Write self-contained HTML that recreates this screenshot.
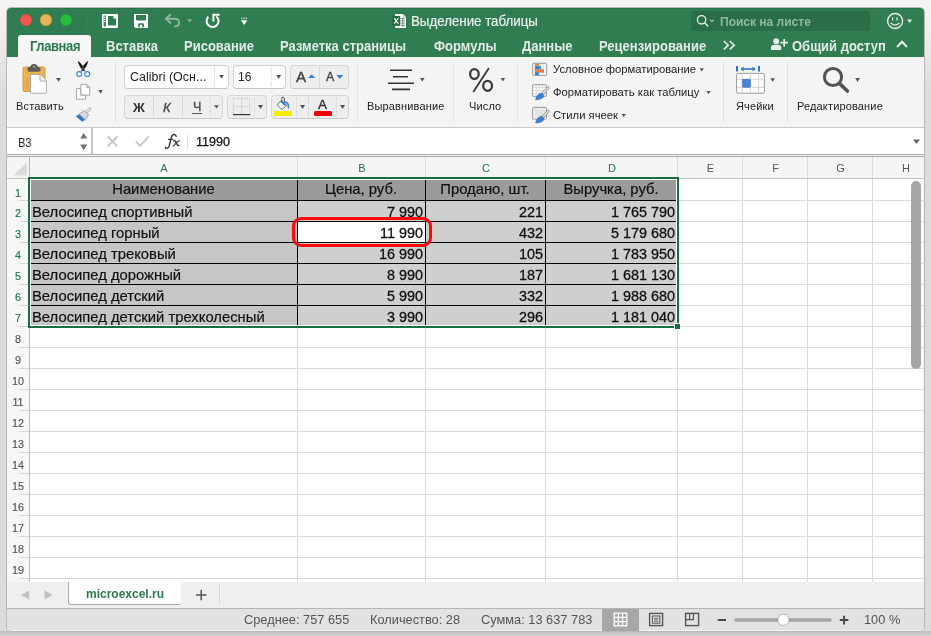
<!DOCTYPE html>
<html><head><meta charset="utf-8">
<style>
*{box-sizing:border-box;margin:0;padding:0}
html,body{width:931px;height:636px;overflow:hidden}
body{position:relative;background:#dcdcdc;font-family:"Liberation Sans",sans-serif;color:#222}
.a{position:absolute}
.t{position:absolute;white-space:nowrap;line-height:1;will-change:transform}
svg{position:absolute;overflow:visible}

</style></head><body>
<!-- outside -->
<div class="a" style="left:0;top:0;width:931px;height:120px;background:linear-gradient(#f5f5f5 0px,#f0f0f0 25px,#dcdcdc 95px)"></div>
<div class="a" style="left:0;top:631px;width:931px;height:5px;background:linear-gradient(#c2c2c2,#d0d0d0)"></div>
<!-- window frame -->
<div class="a" style="left:6px;top:7px;width:919px;height:625px;border-radius:5px;background:#f4f4f4;border:1px solid #b9b9b9"></div>
<!-- title bar green -->
<div class="a" style="left:7px;top:8px;width:917px;height:49px;border-radius:4px 4px 0 0;background:#307d51"></div>
<div class="a" style="left:11px;top:8px;width:909px;height:1px;background:#2a7249"></div>
<!-- traffic lights -->
<div class="a" style="left:20px;top:14px;width:12px;height:12px;border-radius:50%;background:#f2564f;box-shadow:inset 0 0 0 .6px #c9453d"></div>
<div class="a" style="left:40px;top:14px;width:12px;height:12px;border-radius:50%;background:#e9b35c;box-shadow:inset 0 0 0 .6px #c28a32"></div>
<div class="a" style="left:60px;top:14px;width:12px;height:12px;border-radius:50%;background:#29bb3c;box-shadow:inset 0 0 0 .6px #1f982d"></div>
<div class="a" style="left:86px;top:12px;width:1px;height:17px;background:#3a8559"></div>

<!-- title bar icons -->
<svg style="left:0;top:0" width="931" height="60" viewBox="0 0 931 60">
  <!-- sidebar icon -->
  <rect x="102" y="14" width="16" height="14" rx="1" fill="#fff"/>
  <rect x="103.6" y="15.5" width="2.2" height="11" fill="#307d51"/>
  <circle cx="104.7" cy="17.3" r=".7" fill="#fff"/><circle cx="104.7" cy="19.4" r=".7" fill="#fff"/><circle cx="104.7" cy="21.5" r=".7" fill="#fff"/>
  <path d="M108 16 H113.2 L116 18.8 V25.5 H108 Z" fill="#307d51"/>
  <path d="M113.4 16.2 L115.8 18.6 H113.4 Z" fill="#fff"/>
  <!-- save icon -->
  <path d="M134 14 H147 Q148 14 148 15 V27 Q148 28 147 28 H135.6 L134 26.4 Z" fill="#fff"/>
  <path d="M136 15 H146 V19.2 Q146 20.6 144.6 20.6 H137.4 Q136 20.6 136 19.2 Z" fill="#307d51"/>
  <path d="M138.2 27.2 V24.6 Q138.2 23.2 139.6 23.2 H142.6 Q144 23.2 144 24.6 V27.2 Z" fill="#307d51"/>
  <rect x="139.8" y="24.8" width="2.4" height="2.4" fill="#fff"/>
  <!-- undo dim -->
  <g fill="none" stroke="#8db99c" stroke-width="1.9" stroke-linecap="round" stroke-linejoin="round">
    <path d="M170.3 14.8 L166 18.8 L170.3 22.8"/>
    <path d="M166.3 18.8 H174.5 Q179 18.8 179 22.7 Q179 26.4 175 26.4"/>
  </g>
  <path d="M187.3 19.2 H191.9 L189.6 22.4 Z" fill="#8db99c"/>
  <!-- redo -->
  <g fill="none" stroke="#fff" stroke-width="2" stroke-linecap="butt">
    <path d="M208.4 16.7 A6 6 0 1 0 216.4 16.4"/>
    <path d="M219.6 14.8 H213.4 V21.4"/>
  </g>
  <!-- customize -->
  <path d="M241.3 18.2 H247.3" stroke="#fff" stroke-width="1" stroke-dasharray="1 .6"/>
  <path d="M241 20.3 H247.4 L244.2 25 Z" fill="#fff"/>
  <!-- doc icon -->
  <path d="M395 14 H403 L406 17 V28 H395 Z" fill="#fff"/>
  <path d="M403 14 V17 H406" fill="none" stroke="#9a9a9a" stroke-width=".6"/>
  <g stroke="#666" stroke-width=".7">
    <path d="M400.5 18.5 H405 M400.5 20.8 H405 M400.5 23.1 H405 M400.5 25.4 H405 M402.8 18 V27"/>
  </g>
  <rect x="392.4" y="16" width="7.8" height="9.8" fill="#1e6a3d"/>
  <path d="M394.2 18.2 L398.4 23.6 M398.4 18.2 L394.2 23.6" stroke="#fff" stroke-width="1.2"/>
  <!-- search -->
  <rect x="691" y="11" width="179" height="20" rx="3" fill="#2a6e47"/>
  <circle cx="701.6" cy="19.8" r="4.2" fill="none" stroke="#e8efe9" stroke-width="1.3"/>
  <path d="M704.6 22.8 L707.8 26" stroke="#e8efe9" stroke-width="1.4" stroke-linecap="round"/>
  <path d="M709.8 19.6 L711.9 21.6 L714 19.6" fill="none" stroke="#e8efe9" stroke-width="1"/>
  <!-- smiley -->
  <circle cx="895.1" cy="21" r="7.5" fill="none" stroke="#eef3ef" stroke-width="1.3"/>
  <path d="M892.6 17.3 V20.4 M897 17.3 V20.4" stroke="#eef3ef" stroke-width="1.2"/>
  <path d="M890.6 22.8 Q895.1 27.4 899.6 22.8" fill="none" stroke="#eef3ef" stroke-width="1.2"/>
  <path d="M907.2 19.4 H912 L909.6 23 Z" fill="#eef3ef"/>
  <!-- chevrons >> -->
  <g fill="none" stroke="#e6eee8" stroke-width="1.6">
    <path d="M723.8 41 L728.2 45.2 L723.8 49.4 M729.8 41 L734.2 45.2 L729.8 49.4"/>
  </g>
  <!-- person + -->
  <circle cx="776.2" cy="41.3" r="3" fill="#e6eee8"/>
  <path d="M771 50 V47.8 Q771 44.8 774.4 44.8 H778 Q781.2 44.8 781.2 47.8 V50 Z" fill="#e6eee8"/>
  <path d="M780.4 42.6 H788 M784.2 38.9 V46.4" stroke="#e6eee8" stroke-width="1.7"/>
  <!-- collapse ^ -->
  <path d="M897.6 46.4 L902 41.8 L906.4 46.4" fill="none" stroke="#eef3ef" stroke-width="2" stroke-linecap="round"/>
</svg>
<!-- title -->
<div class="t" style="left:411.4px;top:14.3px;font-size:13.3px;color:#eef3ef;transform:scaleY(1.12);transform-origin:0 0;-webkit-text-stroke:.15px #eef3ef">Выделение таблицы</div>
<div class="t" style="left:720px;top:16px;font-size:12px;font-weight:bold;color:#8dbb9c">Поиск на листе</div>
<!-- active tab -->
<div class="a" style="left:18px;top:35px;width:73px;height:22px;background:#f6f6f6;border-radius:3px 3px 0 0"></div>
<div class="t" style="left:30px;top:38.6px;font-size:13px;font-weight:bold;transform:scaleY(1.09);transform-origin:0 0;color:#2b7a4b;letter-spacing:-0.4px">Главная</div>
<div class="t" style="left:106px;top:38.6px;font-size:13px;font-weight:bold;transform:scaleY(1.09);transform-origin:0 0;color:#e2ebe5">Вставка</div>
<div class="t" style="left:184px;top:38.6px;font-size:13px;font-weight:bold;transform:scaleY(1.09);transform-origin:0 0;color:#e2ebe5">Рисование</div>
<div class="t" style="left:280px;top:38.6px;font-size:13px;font-weight:bold;transform:scaleY(1.09);transform-origin:0 0;color:#e2ebe5">Разметка страницы</div>
<div class="t" style="left:434px;top:38.6px;font-size:13px;font-weight:bold;transform:scaleY(1.09);transform-origin:0 0;color:#e2ebe5">Формулы</div>
<div class="t" style="left:522px;top:38.6px;font-size:13px;font-weight:bold;transform:scaleY(1.09);transform-origin:0 0;color:#e2ebe5">Данные</div>
<div class="t" style="left:599px;top:38.6px;font-size:13px;font-weight:bold;transform:scaleY(1.09);transform-origin:0 0;color:#e2ebe5">Рецензирование</div>
<div class="t" style="left:792px;top:38.6px;font-size:13px;font-weight:bold;transform:scaleY(1.09);transform-origin:0 0;color:#e2ebe5">Общий доступ</div>

<!-- ribbon -->
<div class="a" style="left:7px;top:57px;width:917px;height:71px;background:#f4f4f4"></div>
<div class="a" style="left:7px;top:127px;width:917px;height:1px;background:#c8c8c8"></div>
<!-- separators -->
<div class="a" style="left:115px;top:62px;width:1px;height:60px;background:#e2e2e2"></div>
<div class="a" style="left:357px;top:62px;width:1px;height:60px;background:#e2e2e2"></div>
<div class="a" style="left:453px;top:62px;width:1px;height:60px;background:#e2e2e2"></div>
<div class="a" style="left:517px;top:62px;width:1px;height:60px;background:#e2e2e2"></div>
<div class="a" style="left:723px;top:62px;width:1px;height:60px;background:#e2e2e2"></div>
<div class="a" style="left:787px;top:62px;width:1px;height:60px;background:#e2e2e2"></div>
<!-- font boxes -->
<div class="a" style="left:124px;top:65px;width:105px;height:24px;border-radius:4px;background:#fff;border:1px solid #d3d3d3;border-bottom-color:#c4c4c4"></div>
<div class="a" style="left:214px;top:68px;width:0;height:18px;border-left:1px dotted #d6d6d6"></div>
<div class="a" style="left:233px;top:65px;width:53px;height:24px;border-radius:4px;background:#fff;border:1px solid #d3d3d3;border-bottom-color:#c4c4c4"></div>
<div class="a" style="left:271px;top:68px;width:0;height:18px;border-left:1px dotted #d6d6d6"></div>
<div class="a" style="left:290px;top:65px;width:59px;height:24px;border-radius:4px;background:#eeeeee;border:1px solid #d6d6d6;border-bottom-color:#c8c8c8"></div>
<div class="a" style="left:319px;top:66px;width:1px;height:22px;background:#dadada"></div>
<div class="a" style="left:124px;top:95px;width:99px;height:24px;border-radius:4px;background:#eeeeee;border:1px solid #d6d6d6;border-bottom-color:#c8c8c8"></div>
<div class="a" style="left:153px;top:96px;width:1px;height:22px;background:#dadada"></div>
<div class="a" style="left:182px;top:96px;width:1px;height:22px;background:#dadada"></div>
<div class="a" style="left:210px;top:98px;width:0;height:18px;border-left:1px dotted #d3d3d3"></div>
<div class="a" style="left:227px;top:95px;width:40px;height:24px;border-radius:4px;background:#eeeeee;border:1px solid #d6d6d6;border-bottom-color:#c8c8c8"></div>
<div class="a" style="left:254px;top:98px;width:0;height:18px;border-left:1px dotted #d3d3d3"></div>
<div class="a" style="left:271px;top:95px;width:78px;height:24px;border-radius:4px;background:#eeeeee;border:1px solid #d6d6d6;border-bottom-color:#c8c8c8"></div>
<div class="a" style="left:296px;top:98px;width:0;height:18px;border-left:1px dotted #d3d3d3"></div>
<div class="a" style="left:308px;top:96px;width:1px;height:22px;background:#dadada"></div>
<div class="a" style="left:336px;top:98px;width:0;height:18px;border-left:1px dotted #d3d3d3"></div>
<div class="t" style="left:129.6px;top:71.4px;font-size:12.5px;color:#222">Calibri (Осн...</div>
<div class="t" style="left:238.2px;top:71px;font-size:12px;color:#222">16</div>
<div class="t" style="left:296px;top:68.6px;font-size:15.2px;color:#444;-webkit-text-stroke:.45px #444">A</div>
<div class="t" style="left:325.8px;top:71.2px;font-size:12.4px;color:#444;-webkit-text-stroke:.35px #444">A</div>
<div class="t" style="left:133px;top:101px;font-size:13px;font-weight:bold;color:#333">Ж</div>
<div class="t" style="left:163px;top:101px;font-size:13px;font-style:italic;color:#4a4a4a;-webkit-text-stroke:.35px #4a4a4a">К</div>
<div class="t" style="left:193px;top:101px;font-size:12.5px;color:#4a4a4a;-webkit-text-stroke:.3px #4a4a4a">Ч</div>
<div class="a" style="left:192px;top:113px;width:10px;height:1px;background:#555"></div>
<div class="t" style="left:317.6px;top:98.4px;font-size:13.5px;color:#333;-webkit-text-stroke:.35px #333">A</div>
<div class="a" style="left:274px;top:111px;width:18px;height:4.6px;background:#f0ef00"></div>
<div class="a" style="left:314px;top:111px;width:18px;height:4.6px;border-radius:1.5px;background:#ee0000"></div>
<!-- labels -->
<div class="t" style="left:16px;top:101.4px;font-size:11px;color:#222;letter-spacing:.15px">Вставить</div>
<div class="t" style="left:367px;top:101.4px;font-size:11px;color:#222;letter-spacing:.15px">Выравнивание</div>
<div class="t" style="left:469px;top:101.4px;font-size:11px;color:#222;letter-spacing:.15px">Число</div>
<div class="t" style="left:553.4px;top:64.2px;font-size:11.25px;color:#222">Условное форматирование</div>
<div class="t" style="left:553.4px;top:87px;font-size:11.25px;color:#222">Форматировать как таблицу</div>
<div class="t" style="left:553.4px;top:110px;font-size:11.25px;color:#222">Стили ячеек</div>
<div class="t" style="left:736px;top:101.4px;font-size:11px;color:#222;letter-spacing:.15px">Ячейки</div>
<div class="t" style="left:797px;top:101.4px;font-size:11px;color:#222;letter-spacing:.15px">Редактирование</div>
<svg style="left:0;top:0" width="931" height="130" viewBox="0 0 931 130">
  <!-- paste -->
  <rect x="23" y="67" width="22" height="24.5" rx="1.5" fill="#eab34f" stroke="#d58a3c" stroke-width=".8"/>
  <rect x="27.4" y="67" width="13.2" height="4.8" rx="2" fill="#5c5c5c"/>
  <path d="M30.2 67.5 Q30.2 64 34 64 Q37.8 64 37.8 67.5 Z" fill="#5c5c5c"/>
  <circle cx="34" cy="66.6" r=".9" fill="#eab34f"/>
  <g fill="#d68a3e"><circle cx="27.5" cy="77" r=".6"/><circle cx="27.5" cy="79" r=".6"/><circle cx="27.5" cy="81" r=".6"/><circle cx="26.3" cy="83" r=".6"/><circle cx="28.4" cy="83" r=".6"/><circle cx="26.3" cy="85" r=".6"/><circle cx="28.4" cy="85" r=".6"/><circle cx="26.3" cy="87" r=".6"/><circle cx="28.4" cy="87" r=".6"/><circle cx="26.3" cy="89" r=".6"/><circle cx="28.4" cy="89" r=".6"/></g>
  <path d="M30.5 74.5 H40 L46.4 81 V92.6 Q46.4 93.2 45.8 93.2 H31.1 Q30.5 93.2 30.5 92.6 Z" fill="#fff" stroke="#9a9a9a" stroke-width=".8"/>
  <path d="M40 74.5 V80.4 Q40 81 40.6 81 H46.4" fill="#f0f0f0" stroke="#9a9a9a" stroke-width=".8"/>
  <path d="M56 78 H61 L58.5 81.7 Z" fill="#555"/>
  <!-- scissors -->
  <path d="M78.2 61.4 Q79.4 67.6 84.6 71.4 Q83.4 65 78.2 61.4 Z M87.8 61.4 Q86.6 67.6 81.4 71.4 Q82.6 65 87.8 61.4 Z" fill="#111" stroke="#111" stroke-width=".6" stroke-linejoin="round"/>
  <circle cx="79.2" cy="74" r="2.45" fill="#fff" stroke="#3784da" stroke-width="1.2"/>
  <circle cx="87.2" cy="74" r="2.45" fill="#fff" stroke="#3784da" stroke-width="1.2"/>
  <!-- copy -->
  <path d="M80.8 84.4 H86.8 L89.8 87.4 V95.2 H80.8 Z" fill="#fff" stroke="#9c9c9c" stroke-width=".9"/>
  <path d="M86.8 84.4 V87.4 H89.8" fill="none" stroke="#9c9c9c" stroke-width=".9"/>
  <path d="M76.4 88.6 H80.8 V95.2 H85.6 V99.2 H76.4 Z" fill="#fff" stroke="#9c9c9c" stroke-width=".9"/>
  <path d="M98.3 90 H102.8 L100.55 93.8 Z" fill="#555"/>
  <!-- brush -->
  <path d="M85.5 111.5 L89.5 107.8 Q91.4 107.6 90.8 109.8 L87 113.3 Z" fill="#e3e3e3" stroke="#9a9a9a" stroke-width=".7"/>
  <path d="M79 114.2 L84.3 110.6 L88.6 114.9 L85 120.2 Z" fill="#d9d9d9" stroke="#8f8f8f" stroke-width=".7"/>
  <path d="M75.6 116 L79.6 114.4 L85 119.8 L82.2 121.8 Z" fill="#2f73cc"/>
  <path d="M79 114.5 L84.6 120" stroke="#8a8a8a" stroke-width=".8"/>
  <!-- A▲ A▼ triangles -->
  <path d="M308 78 L311.6 74.3 L315.3 78 Z" fill="#3a82d8"/>
  <path d="M336.3 75 H343.3 L339.8 79 Z" fill="#3a82d8"/>
  <!-- dropdown arrows -->
  <g fill="#555">
    <path d="M219.2 75 H223.8 L221.5 78.8 Z"/>
    <path d="M276.3 75 H281 L278.65 79 Z"/>
    <path d="M214 105.2 H219 L216.5 108.6 Z"/>
    <path d="M258 105 H263 L260.5 109 Z"/>
    <path d="M300 105 H305 L302.5 109 Z"/>
    <path d="M340 105 H345 L342.5 109 Z"/>
    <path d="M420 78 H424.6 L422.3 81.6 Z"/>
    <path d="M500.6 78 H505.2 L502.9 81.6 Z"/>
    <path d="M699.6 68.2 H703.8 L701.7 71.4 Z"/>
    <path d="M706.4 91 H710.6 L708.5 94.2 Z"/>
    <path d="M621.6 114 H625.8 L623.7 117.2 Z"/>
    <path d="M770.3 78.2 H775 L772.65 81.7 Z"/>
    <path d="M855.2 78 H860 L857.6 82 Z"/>
  </g>
  <!-- borders icon -->
  <g stroke="#a8a8a8" stroke-width=".7" stroke-dasharray=".9 1.1" fill="none">
    <rect x="233.4" y="98.4" width="16.4" height="16"/>
    <path d="M241.6 98.4 V114.4 M233.4 106.4 H249.8"/>
  </g>
  <path d="M233 114.6 H250.2" stroke="#333" stroke-width="1.2"/>
  <!-- fill bucket -->
  <path d="M277.1 104.8 L281.2 100.6 L286.5 105.3 L282 109.6 Z" fill="#fff" stroke="#666" stroke-width="1"/>
  <path d="M281.4 101.4 L285.7 105.3" stroke="#3a82d8" stroke-width="2.2"/>
  <path d="M281.6 101.6 Q281.2 97 283.2 97 Q284.8 97 284.4 102.6" fill="none" stroke="#333" stroke-width=".9"/>
  <path d="M285 102 Q288.8 102.4 288.4 107.6" fill="none" stroke="#3a82d8" stroke-width="1.6" stroke-linecap="round"/>
  <!-- alignment -->
  <g stroke="#333" stroke-width="1.6">
    <path d="M390 70.2 H412 M393 76.8 H408 M388 83.2 H414 M392 89.4 H410"/>
  </g>
  <!-- percent -->
  <ellipse cx="474.4" cy="74" rx="4.3" ry="4.95" fill="none" stroke="#3c3c3c" stroke-width="2.3"/>
  <ellipse cx="487.6" cy="85.85" rx="4.4" ry="4.95" fill="none" stroke="#3c3c3c" stroke-width="2.3"/>
  <path d="M488.6 68.6 L473.6 91.4" stroke="#3a3a3a" stroke-width="1.8" stroke-linecap="round"/>
  <!-- conditional formatting icon -->
  <rect x="532.6" y="63.4" width="14" height="12" rx="1.2" fill="#fff" stroke="#a6a6a6" stroke-width="1.1"/>
  <g stroke="#d4d4d4" stroke-width=".8"><path d="M535 63.6 V75.4 M543.5 63.6 V75.4 M533 66.2 H546.2 M533 69.1 H546.2 M533 72.2 H546.2"/></g>
  <rect x="535" y="64" width="3.9" height="2.1" fill="#de8150"/>
  <rect x="535" y="66.1" width="6" height="3" fill="#3a82d6"/>
  <rect x="535" y="69.1" width="9" height="3.6" fill="#de8150"/>
  <rect x="535" y="72.3" width="4" height="2.9" fill="#3a82d6"/>
  <!-- format as table -->
  <g>
    <rect x="532.6" y="84.6" width="13.8" height="11.8" rx="1.2" fill="#fff" stroke="#a6a6a6" stroke-width="1.1"/>
    <g stroke="#d2d2d2" stroke-width=".8"><path d="M536.3 85 V96 M539.4 85 V96 M542.6 85 V96 M533 87.4 H546 M533 90.4 H546 M533 93.4 H546"/></g>
    <path d="M541.8 93.2 L547.6 86.8 Q549.2 86.6 549 88.2 L543.6 94.8 Z" fill="#e6e6e6" stroke="#7d7d7d" stroke-width=".8"/>
    <path d="M535.6 99.8 Q536 95.6 539.6 93.6 Q541.8 92.4 543.6 94.4 Q544.6 96.4 542.6 98 Q539.8 100 535.6 99.8 Z" fill="#3b7fd4" stroke="#2a6cc0" stroke-width=".5"/>
  </g>
  <g>
    <rect x="532.6" y="107.4" width="13.8" height="11.8" rx="1.2" fill="#efefef" stroke="#a6a6a6" stroke-width="1.1"/>
    <path d="M533 110.4 H546 M536.2 107.8 V118.8" stroke="#d2d2d2" stroke-width=".8"/>
    <path d="M533 110.4 H546 V118.8 H536.2 V110.4" fill="#e4e4e4" stroke="none"/>
    <path d="M541.8 116.6 L547.6 110.2 Q549.2 110 549 111.6 L543.6 118.2 Z" fill="#e6e6e6" stroke="#7d7d7d" stroke-width=".8"/>
    <path d="M535.6 123 Q536 118.8 539.6 116.8 Q541.8 115.6 543.6 117.6 Q544.6 119.6 542.6 121.2 Q539.8 123.2 535.6 123 Z" fill="#3b7fd4" stroke="#2a6cc0" stroke-width=".5"/>
  </g>
  <!-- cells icon -->
  <rect x="736.6" y="73.4" width="27.8" height="19.8" rx="1.5" fill="#fff" stroke="#9a9a9a" stroke-width="1"/>
  <g stroke="#cfcfcf" stroke-width=".9"><path d="M742.3 73.6 V93 M750.4 73.6 V93 M758.6 73.6 V93 M736.8 79.2 H764.2 M736.8 87.4 H764.2"/></g>
  <rect x="742.4" y="79.3" width="8" height="8" rx=".8" fill="#4a86d0" stroke="#2f6fc4" stroke-width=".6"/>
  <path d="M737 66 V71.6 M759 66 V71.6" stroke="#2f73cc" stroke-width="2"/>
  <path d="M741.2 69 H755" stroke="#2f73cc" stroke-width="1.6"/>
  <path d="M740.6 69 L743.6 66.4 V71.6 Z M755.6 69 L752.6 66.4 V71.6 Z" fill="#2f73cc"/>
  <!-- magnifier -->
  <circle cx="833" cy="77" r="8.6" fill="none" stroke="#535353" stroke-width="3"/>
  <path d="M839.4 83.4 L847.4 91" stroke="#535353" stroke-width="3.6" stroke-linecap="round"/>
</svg>

<!-- formula bar -->
<div class="a" style="left:7px;top:128px;width:917px;height:26px;background:#fff"></div>
<div class="a" style="left:7px;top:154px;width:917px;height:1px;background:#acacac"></div>
<div class="a" style="left:7px;top:155px;width:917px;height:1px;background:#f4f4f4"></div>
<div class="a" style="left:7px;top:156px;width:917px;height:1px;background:#a9a9a9"></div>
<div class="a" style="left:91px;top:128px;width:1.5px;height:26px;background:#c9c9c9"></div>
<div class="t" style="left:17.6px;top:137.2px;font-size:12.5px;color:#222;transform:scaleX(.89);transform-origin:0 0">B3</div>
<div class="a" style="left:187px;top:134.5px;width:1px;height:14.5px;background:#dddddd"></div>
<div class="t" style="left:195.5px;top:136.4px;font-size:12.6px;color:#111;-webkit-text-stroke:.25px #111">11990</div>
<svg style="left:0;top:120px" width="931" height="40" viewBox="0 120 931 40">
  <path d="M80.2 138.5 L83.7 133 L87.2 138.5 Z M80.2 144.4 H87.2 L83.7 150.2 Z" fill="#707070"/>
  <path d="M107.6 136.5 L117.4 146.3 M117.4 136.5 L107.6 146.3" stroke="#c6c6c6" stroke-width="1.9"/>
  <path d="M135.8 141.2 L140.2 145.8 L148.6 136.6" fill="none" stroke="#c9c9c9" stroke-width="2"/>
  <path d="M176.2 136.4 Q175.6 134.4 173.8 134.6 Q171.8 134.9 171 138.6 L169.2 146 Q168.4 148.6 166.6 148.4 Q165.4 148.2 165.6 147.2" fill="none" stroke="#3f3f3f" stroke-width="1.5" stroke-linecap="round"/>
  <path d="M168 139.4 H173.2" stroke="#3f3f3f" stroke-width="1.3"/>
  <path d="M173.6 140.8 Q175 140 175.8 141.6 L177.2 144.6 Q177.8 145.9 179 145.6" fill="none" stroke="#3f3f3f" stroke-width="1.35" stroke-linecap="round"/>
  <path d="M179.4 140.6 Q178.4 140.6 176 143.2 Q174.2 145.6 173.2 145.8" fill="none" stroke="#3f3f3f" stroke-width="1.35" stroke-linecap="round"/>
  <path d="M913 139.4 H920 L916.5 144 Z" fill="#666"/>
</svg>

<div class="a" style="left:7px;top:157px;width:917px;height:21px;background:#f5f5f5"></div>
<div class="a" style="left:7px;top:178px;width:917px;height:1px;background:#c3c3c3"></div>
<div class="a" style="left:7px;top:179px;width:22px;height:403px;background:#f7f7f7"></div>
<div class="a" style="left:29px;top:157px;width:1px;height:425px;background:#b9b9b9"></div>
<div class="a" style="left:30px;top:179px;width:893px;height:403px;background:#fff"></div>
<div class="a" style="left:297px;top:179px;width:1px;height:403px;background:#dadada"></div>
<div class="a" style="left:297px;top:157px;width:1px;height:21px;background:#dcdcdc"></div>
<div class="a" style="left:425px;top:179px;width:1px;height:403px;background:#dadada"></div>
<div class="a" style="left:425px;top:157px;width:1px;height:21px;background:#dcdcdc"></div>
<div class="a" style="left:545px;top:179px;width:1px;height:403px;background:#dadada"></div>
<div class="a" style="left:545px;top:157px;width:1px;height:21px;background:#dcdcdc"></div>
<div class="a" style="left:677px;top:179px;width:1px;height:403px;background:#dadada"></div>
<div class="a" style="left:677px;top:157px;width:1px;height:21px;background:#dcdcdc"></div>
<div class="a" style="left:742px;top:179px;width:1px;height:403px;background:#dadada"></div>
<div class="a" style="left:742px;top:157px;width:1px;height:21px;background:#dcdcdc"></div>
<div class="a" style="left:807px;top:179px;width:1px;height:403px;background:#dadada"></div>
<div class="a" style="left:807px;top:157px;width:1px;height:21px;background:#dcdcdc"></div>
<div class="a" style="left:872px;top:179px;width:1px;height:403px;background:#dadada"></div>
<div class="a" style="left:872px;top:157px;width:1px;height:21px;background:#dcdcdc"></div>
<div class="a" style="left:30px;top:200px;width:894px;height:1px;background:#dadada"></div>
<div class="a" style="left:17px;top:200px;width:12px;height:1px;background:linear-gradient(90deg,rgba(220,220,220,0),#d6d6d6 40%)"></div>
<div class="a" style="left:30px;top:221px;width:894px;height:1px;background:#dadada"></div>
<div class="a" style="left:17px;top:221px;width:12px;height:1px;background:linear-gradient(90deg,rgba(220,220,220,0),#d6d6d6 40%)"></div>
<div class="a" style="left:30px;top:242px;width:894px;height:1px;background:#dadada"></div>
<div class="a" style="left:17px;top:242px;width:12px;height:1px;background:linear-gradient(90deg,rgba(220,220,220,0),#d6d6d6 40%)"></div>
<div class="a" style="left:30px;top:263px;width:894px;height:1px;background:#dadada"></div>
<div class="a" style="left:17px;top:263px;width:12px;height:1px;background:linear-gradient(90deg,rgba(220,220,220,0),#d6d6d6 40%)"></div>
<div class="a" style="left:30px;top:284px;width:894px;height:1px;background:#dadada"></div>
<div class="a" style="left:17px;top:284px;width:12px;height:1px;background:linear-gradient(90deg,rgba(220,220,220,0),#d6d6d6 40%)"></div>
<div class="a" style="left:30px;top:305px;width:894px;height:1px;background:#dadada"></div>
<div class="a" style="left:17px;top:305px;width:12px;height:1px;background:linear-gradient(90deg,rgba(220,220,220,0),#d6d6d6 40%)"></div>
<div class="a" style="left:30px;top:326px;width:894px;height:1px;background:#dadada"></div>
<div class="a" style="left:17px;top:326px;width:12px;height:1px;background:linear-gradient(90deg,rgba(220,220,220,0),#d6d6d6 40%)"></div>
<div class="a" style="left:30px;top:347px;width:894px;height:1px;background:#dadada"></div>
<div class="a" style="left:17px;top:347px;width:12px;height:1px;background:linear-gradient(90deg,rgba(220,220,220,0),#d6d6d6 40%)"></div>
<div class="a" style="left:30px;top:368px;width:894px;height:1px;background:#dadada"></div>
<div class="a" style="left:17px;top:368px;width:12px;height:1px;background:linear-gradient(90deg,rgba(220,220,220,0),#d6d6d6 40%)"></div>
<div class="a" style="left:30px;top:389px;width:894px;height:1px;background:#dadada"></div>
<div class="a" style="left:17px;top:389px;width:12px;height:1px;background:linear-gradient(90deg,rgba(220,220,220,0),#d6d6d6 40%)"></div>
<div class="a" style="left:30px;top:410px;width:894px;height:1px;background:#dadada"></div>
<div class="a" style="left:17px;top:410px;width:12px;height:1px;background:linear-gradient(90deg,rgba(220,220,220,0),#d6d6d6 40%)"></div>
<div class="a" style="left:30px;top:431px;width:894px;height:1px;background:#dadada"></div>
<div class="a" style="left:17px;top:431px;width:12px;height:1px;background:linear-gradient(90deg,rgba(220,220,220,0),#d6d6d6 40%)"></div>
<div class="a" style="left:30px;top:452px;width:894px;height:1px;background:#dadada"></div>
<div class="a" style="left:17px;top:452px;width:12px;height:1px;background:linear-gradient(90deg,rgba(220,220,220,0),#d6d6d6 40%)"></div>
<div class="a" style="left:30px;top:473px;width:894px;height:1px;background:#dadada"></div>
<div class="a" style="left:17px;top:473px;width:12px;height:1px;background:linear-gradient(90deg,rgba(220,220,220,0),#d6d6d6 40%)"></div>
<div class="a" style="left:30px;top:494px;width:894px;height:1px;background:#dadada"></div>
<div class="a" style="left:17px;top:494px;width:12px;height:1px;background:linear-gradient(90deg,rgba(220,220,220,0),#d6d6d6 40%)"></div>
<div class="a" style="left:30px;top:515px;width:894px;height:1px;background:#dadada"></div>
<div class="a" style="left:17px;top:515px;width:12px;height:1px;background:linear-gradient(90deg,rgba(220,220,220,0),#d6d6d6 40%)"></div>
<div class="a" style="left:30px;top:536px;width:894px;height:1px;background:#dadada"></div>
<div class="a" style="left:17px;top:536px;width:12px;height:1px;background:linear-gradient(90deg,rgba(220,220,220,0),#d6d6d6 40%)"></div>
<div class="a" style="left:30px;top:557px;width:894px;height:1px;background:#dadada"></div>
<div class="a" style="left:17px;top:557px;width:12px;height:1px;background:linear-gradient(90deg,rgba(220,220,220,0),#d6d6d6 40%)"></div>
<div class="a" style="left:30px;top:578px;width:894px;height:1px;background:#dadada"></div>
<div class="a" style="left:17px;top:578px;width:12px;height:1px;background:linear-gradient(90deg,rgba(220,220,220,0),#d6d6d6 40%)"></div>
<svg style="left:0;top:150px" width="40" height="40" viewBox="0 150 40 40"><path d="M27 162 V175.6 H13.2 Z" fill="#dcdcdc"/></svg>
<div class="t" style="left:29.5px;width:268px;top:163px;text-align:center;font-size:11px;color:#217a45">A</div>
<div class="t" style="left:297.5px;width:128px;top:163px;text-align:center;font-size:11px;color:#217a45">B</div>
<div class="t" style="left:425.5px;width:120px;top:163px;text-align:center;font-size:11px;color:#217a45">C</div>
<div class="t" style="left:545.5px;width:132px;top:163px;text-align:center;font-size:11px;color:#217a45">D</div>
<div class="t" style="left:677.5px;width:65px;top:163px;text-align:center;font-size:11px;color:#555">E</div>
<div class="t" style="left:742.5px;width:65px;top:163px;text-align:center;font-size:11px;color:#555">F</div>
<div class="t" style="left:807.5px;width:65px;top:163px;text-align:center;font-size:11px;color:#555">G</div>
<div class="t" style="left:872.5px;width:66px;top:163px;text-align:center;font-size:11px;color:#555">H</div>
<div class="t" style="left:7px;width:22px;top:188.2px;text-align:center;font-size:10.8px;color:#217a45;-webkit-text-stroke:.15px #217a45">1</div>
<div class="t" style="left:7px;width:22px;top:208.2px;text-align:center;font-size:10.8px;color:#217a45;-webkit-text-stroke:.15px #217a45">2</div>
<div class="t" style="left:7px;width:22px;top:229.2px;text-align:center;font-size:10.8px;color:#217a45;-webkit-text-stroke:.15px #217a45">3</div>
<div class="t" style="left:7px;width:22px;top:250.2px;text-align:center;font-size:10.8px;color:#217a45;-webkit-text-stroke:.15px #217a45">4</div>
<div class="t" style="left:7px;width:22px;top:271.2px;text-align:center;font-size:10.8px;color:#217a45;-webkit-text-stroke:.15px #217a45">5</div>
<div class="t" style="left:7px;width:22px;top:292.2px;text-align:center;font-size:10.8px;color:#217a45;-webkit-text-stroke:.15px #217a45">6</div>
<div class="t" style="left:7px;width:22px;top:313.2px;text-align:center;font-size:10.8px;color:#217a45;-webkit-text-stroke:.15px #217a45">7</div>
<div class="t" style="left:7px;width:22px;top:334.2px;text-align:center;font-size:10.8px;color:#555;-webkit-text-stroke:.15px #555">8</div>
<div class="t" style="left:7px;width:22px;top:355.2px;text-align:center;font-size:10.8px;color:#555;-webkit-text-stroke:.15px #555">9</div>
<div class="t" style="left:7px;width:22px;top:376.2px;text-align:center;font-size:10.8px;color:#555;-webkit-text-stroke:.15px #555">10</div>
<div class="t" style="left:7px;width:22px;top:397.2px;text-align:center;font-size:10.8px;color:#555;-webkit-text-stroke:.15px #555">11</div>
<div class="t" style="left:7px;width:22px;top:418.2px;text-align:center;font-size:10.8px;color:#555;-webkit-text-stroke:.15px #555">12</div>
<div class="t" style="left:7px;width:22px;top:439.2px;text-align:center;font-size:10.8px;color:#555;-webkit-text-stroke:.15px #555">13</div>
<div class="t" style="left:7px;width:22px;top:460.2px;text-align:center;font-size:10.8px;color:#555;-webkit-text-stroke:.15px #555">14</div>
<div class="t" style="left:7px;width:22px;top:481.2px;text-align:center;font-size:10.8px;color:#555;-webkit-text-stroke:.15px #555">15</div>
<div class="t" style="left:7px;width:22px;top:502.2px;text-align:center;font-size:10.8px;color:#555;-webkit-text-stroke:.15px #555">16</div>
<div class="t" style="left:7px;width:22px;top:523.2px;text-align:center;font-size:10.8px;color:#555;-webkit-text-stroke:.15px #555">17</div>
<div class="t" style="left:7px;width:22px;top:544.2px;text-align:center;font-size:10.8px;color:#555;-webkit-text-stroke:.15px #555">18</div>
<div class="t" style="left:7px;width:22px;top:565.2px;text-align:center;font-size:10.8px;color:#555;-webkit-text-stroke:.15px #555">19</div>
<div class="a" style="left:911px;top:181px;width:10px;height:188px;border-radius:5px;background:#a4a6a4"></div>
<div class="a" style="left:30px;top:179px;width:647px;height:147px;background:#fff"></div>
<div class="a" style="left:31px;top:180px;width:645px;height:20px;background:#9b9b9b"></div>
<div class="a" style="left:31px;top:201px;width:266px;height:124px;background:#c6c6c6"></div>
<div class="a" style="left:298px;top:201px;width:378px;height:124px;background:#cfcfcf"></div>
<div class="a" style="left:298px;top:222px;width:127px;height:20px;background:#fff"></div>
<div class="a" style="left:297px;top:180px;width:1px;height:145px;background:#000"></div>
<div class="a" style="left:425px;top:180px;width:1px;height:145px;background:#000"></div>
<div class="a" style="left:545px;top:180px;width:1px;height:145px;background:#000"></div>
<div class="a" style="left:31px;top:200px;width:645px;height:1px;background:#000"></div>
<div class="a" style="left:31px;top:221px;width:645px;height:1px;background:#000"></div>
<div class="a" style="left:31px;top:242px;width:645px;height:1px;background:#000"></div>
<div class="a" style="left:31px;top:263px;width:645px;height:1px;background:#000"></div>
<div class="a" style="left:31px;top:284px;width:645px;height:1px;background:#000"></div>
<div class="a" style="left:31px;top:305px;width:645px;height:1px;background:#000"></div>
<div class="a" style="left:28px;top:177px;width:651px;height:151px;border:2px solid #17703d"></div>
<div class="a" style="left:675px;top:324px;width:5px;height:5px;background:#17703d;box-shadow:0 0 0 1px #fff"></div>
<div class="t" style="left:30px;width:267px;top:181.9px;text-align:center;font-size:14.8px;color:#111;-webkit-text-stroke:.2px #111">Наименование</div>
<div class="t" style="left:297px;width:128px;top:181.9px;text-align:center;font-size:14.8px;color:#111;-webkit-text-stroke:.2px #111">Цена, руб.</div>
<div class="t" style="left:425px;width:120px;top:181.9px;text-align:center;font-size:14.8px;color:#111;-webkit-text-stroke:.2px #111">Продано, шт.</div>
<div class="t" style="left:545px;width:132px;top:181.9px;text-align:center;font-size:14.8px;color:#111;-webkit-text-stroke:.2px #111">Выручка, руб.</div>
<div class="t" style="left:32px;top:204.55px;font-size:14.8px;color:#111;-webkit-text-stroke:.2px #111">Велосипед спортивный</div>
<div class="t" style="left:297px;width:126px;top:204.7px;text-align:right;font-size:14.4px;color:#111;-webkit-text-stroke:.3px #111">7 990</div>
<div class="t" style="left:425px;width:118px;top:204.7px;text-align:right;font-size:14.4px;color:#111;-webkit-text-stroke:.3px #111">221</div>
<div class="t" style="left:545px;width:130px;top:204.7px;text-align:right;font-size:14.4px;color:#111;-webkit-text-stroke:.3px #111">1 765 790</div>
<div class="t" style="left:32px;top:225.55px;font-size:14.8px;color:#111;-webkit-text-stroke:.2px #111">Велосипед горный</div>
<div class="t" style="left:297px;width:126px;top:225.7px;text-align:right;font-size:14.4px;color:#111;-webkit-text-stroke:.3px #111">11 990</div>
<div class="t" style="left:425px;width:118px;top:225.7px;text-align:right;font-size:14.4px;color:#111;-webkit-text-stroke:.3px #111">432</div>
<div class="t" style="left:545px;width:130px;top:225.7px;text-align:right;font-size:14.4px;color:#111;-webkit-text-stroke:.3px #111">5 179 680</div>
<div class="t" style="left:32px;top:246.55px;font-size:14.8px;color:#111;-webkit-text-stroke:.2px #111">Велосипед трековый</div>
<div class="t" style="left:297px;width:126px;top:246.7px;text-align:right;font-size:14.4px;color:#111;-webkit-text-stroke:.3px #111">16 990</div>
<div class="t" style="left:425px;width:118px;top:246.7px;text-align:right;font-size:14.4px;color:#111;-webkit-text-stroke:.3px #111">105</div>
<div class="t" style="left:545px;width:130px;top:246.7px;text-align:right;font-size:14.4px;color:#111;-webkit-text-stroke:.3px #111">1 783 950</div>
<div class="t" style="left:32px;top:267.55px;font-size:14.8px;color:#111;-webkit-text-stroke:.2px #111">Велосипед дорожный</div>
<div class="t" style="left:297px;width:126px;top:267.7px;text-align:right;font-size:14.4px;color:#111;-webkit-text-stroke:.3px #111">8 990</div>
<div class="t" style="left:425px;width:118px;top:267.7px;text-align:right;font-size:14.4px;color:#111;-webkit-text-stroke:.3px #111">187</div>
<div class="t" style="left:545px;width:130px;top:267.7px;text-align:right;font-size:14.4px;color:#111;-webkit-text-stroke:.3px #111">1 681 130</div>
<div class="t" style="left:32px;top:288.55px;font-size:14.8px;color:#111;-webkit-text-stroke:.2px #111">Велосипед детский</div>
<div class="t" style="left:297px;width:126px;top:288.7px;text-align:right;font-size:14.4px;color:#111;-webkit-text-stroke:.3px #111">5 990</div>
<div class="t" style="left:425px;width:118px;top:288.7px;text-align:right;font-size:14.4px;color:#111;-webkit-text-stroke:.3px #111">332</div>
<div class="t" style="left:545px;width:130px;top:288.7px;text-align:right;font-size:14.4px;color:#111;-webkit-text-stroke:.3px #111">1 988 680</div>
<div class="t" style="left:32px;top:309.55px;font-size:14.8px;color:#111;-webkit-text-stroke:.2px #111">Велосипед детский трехколесный</div>
<div class="t" style="left:297px;width:126px;top:309.7px;text-align:right;font-size:14.4px;color:#111;-webkit-text-stroke:.3px #111">3 990</div>
<div class="t" style="left:425px;width:118px;top:309.7px;text-align:right;font-size:14.4px;color:#111;-webkit-text-stroke:.3px #111">296</div>
<div class="t" style="left:545px;width:130px;top:309.7px;text-align:right;font-size:14.4px;color:#111;-webkit-text-stroke:.3px #111">1 181 040</div>
<div class="a" style="left:292px;top:217px;width:140px;height:30px;border:3.2px solid #fc0a0a;border-radius:9px"></div>
<!-- tab bar -->
<div class="a" style="left:7px;top:582px;width:917px;height:26px;background:#efefef"></div>
<div class="a" style="left:68px;top:582px;width:113px;height:23.4px;background:#a9a9a9;border-radius:0 0 3px 3px"></div>
<div class="a" style="left:68.5px;top:581px;width:112px;height:23px;background:#fff;border-radius:0 0 2.5px 2.5px"></div>
<div class="t" style="left:85.6px;top:587.8px;font-size:12px;font-weight:bold;color:#2d7a4c">microexcel.ru</div>
<div class="a" style="left:219px;top:584px;width:1px;height:21px;background:#d8d8d8"></div>
<!-- status bar -->
<div class="a" style="left:7px;top:608px;width:917px;height:1px;background:#b5b5b5"></div>
<div class="a" style="left:7px;top:609px;width:917px;height:21px;background:#e2e2e2;border-radius:0 0 4px 4px"></div>
<div class="a" style="left:602px;top:609px;width:37px;height:22px;background:#a7a7a7"></div>
<div class="t" style="left:244px;top:614px;font-size:12.8px;color:#555">Среднее: 757 655</div>
<div class="t" style="left:370px;top:614px;font-size:12.8px;color:#555">Количество: 28</div>
<div class="t" style="left:481px;top:614px;font-size:12.8px;color:#555">Сумма: 13 637 783</div>
<div class="t" style="left:864px;top:614px;font-size:12.8px;color:#555">100 %</div>
<svg style="left:0;top:570px" width="931" height="66" viewBox="0 570 931 66">
  <path d="M29.2 590.4 V599.6 L21 595 Z M44.6 590.4 V599.6 L52.6 595 Z" fill="#c2c2c2"/>
  <path d="M196 595 H206.4 M201.2 589.8 V600.2" stroke="#555" stroke-width="1.5"/>
  <!-- grid view icon -->
  <rect x="614.2" y="613.2" width="12.6" height="12.6" fill="none" stroke="#fff" stroke-width="1.3"/>
  <path d="M618.4 613.2 V625.8 M622.6 613.2 V625.8 M614.2 617.4 H626.8 M614.2 621.6 H626.8" stroke="#fff" stroke-width="1.3"/>
  <!-- page layout -->
  <rect x="649.6" y="613.4" width="13" height="12.2" fill="none" stroke="#555" stroke-width="1.4"/>
  <rect x="652.4" y="616" width="7.4" height="7.2" fill="none" stroke="#555" stroke-width="1"/>
  <path d="M654 618.3 H658.2 M654 619.8 H658.2 M654 621.3 H658.2" stroke="#555" stroke-width=".8"/>
  <!-- page break -->
  <rect x="685.6" y="613.4" width="13" height="12.2" fill="none" stroke="#555" stroke-width="1.4"/>
  <path d="M689.6 613.4 V619.6 H693.4 V613.4 M685.6 619.6 H689.6" fill="none" stroke="#555" stroke-width="1.2"/>
  <!-- zoom -->
  <path d="M717.8 620 H726" stroke="#4a4a4a" stroke-width="2"/>
  <rect x="734.2" y="618.2" width="97.6" height="3.6" rx="1.8" fill="#a3a3a3"/>
  <circle cx="783.4" cy="619.8" r="5.6" fill="#fff" stroke="#a9a9a9" stroke-width=".8"/>
  <path d="M839.8 620.1 H848.4 M844.1 615.8 V624.4" stroke="#4a4a4a" stroke-width="2"/>
</svg>

</body></html>
